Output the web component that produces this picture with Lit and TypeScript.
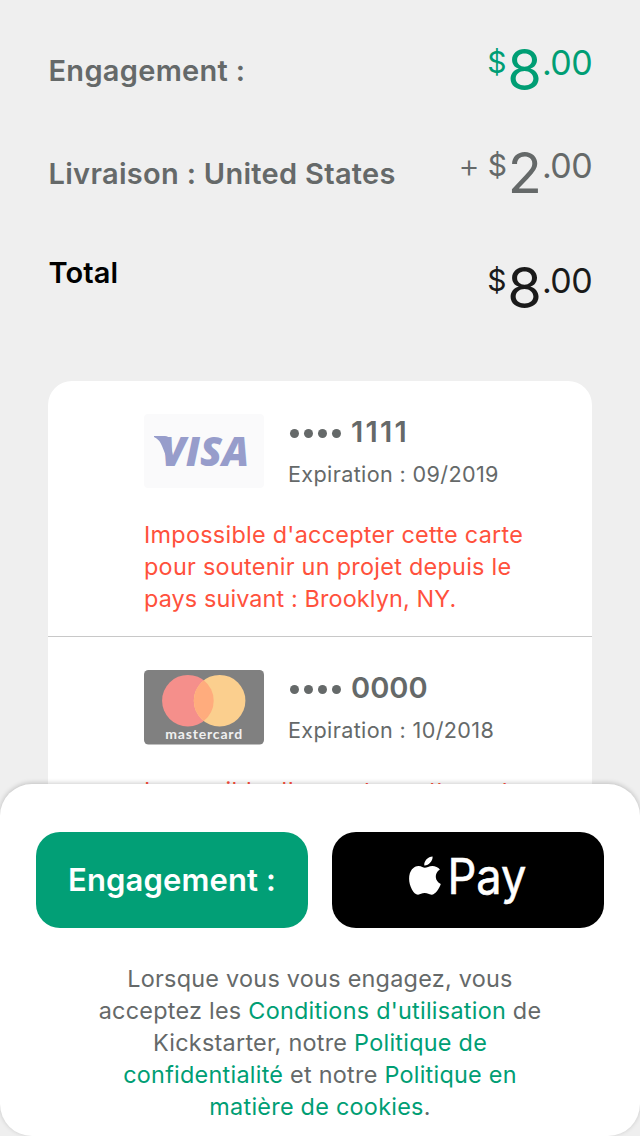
import { LitElement, html, css, svg } from "lit";
import { customElement, property } from "lit/decorators.js";

@customElement("price-tag")
class PriceTag extends LitElement {
  @property() amount = "0";
  @property() prefix = "";
  static styles = css`
    :host { display: flex; align-items: flex-start; font-weight: 400; }
    .plus { font-size: 33px; line-height: 36px; margin-right: 8px; font-weight: 300; }
    .plus, .sym, .main, .cents { display: block; white-space: pre; }
    .sym { font-size: 30px; line-height: 37px; width: 20px; }
    .main { font-size: 56px; line-height: 52px; }
    .cents { font-size: 34px; line-height: 37px; letter-spacing: -0.6px; }
  `;
  render() {
    return html`${this.prefix ? html`<span class="plus">${this.prefix}</span>` : ""}<span class="sym">$</span><span class="main">${this.amount}</span><span class="cents">.00</span>`;
  }
}

const visa = svg`<svg viewBox="0 0 120 74" width="120" height="74">
  <rect width="120" height="74" rx="4" fill="#fafafb"/>
  <path d="M10 22H21Q24.500 22 25.300 25L30 46L25 51Q22 41 18 32Q15.500 25.500 10 23Z" fill="#979dcb"/>
  <text x="17" y="51.500" font-family="Open Sans" font-weight="800" font-style="italic" font-size="41.500" textLength="88" lengthAdjust="spacingAndGlyphs" fill="#979dcb">VISA</text>
</svg>`;

const mastercard = svg`<svg viewBox="0 0 120 74.500" width="120" height="74.500">
  <rect width="120" height="74.500" rx="4.500" fill="#808080"/>
  <circle cx="43.900" cy="30.700" r="25.800" fill="#f58f8b"/>
  <circle cx="75.600" cy="30.700" r="25.800" fill="#fbcf8e"/>
  <path d="M59.750 10.340a25.800 25.800 0 0 1 0 40.720a25.800 25.800 0 0 1 0-40.720Z" fill="#ffac7d"/>
  <text x="21.200" y="69.300" font-family="Lato" font-weight="700" font-size="14" textLength="77" fill="#f0f0f0">mastercard</text>
</svg>`;

@customElement("app-root")
class AppRoot extends LitElement {
  static styles = css`
    :host { display: flex; flex-direction: column; height: 1136px; overflow: hidden; background: #efefef; font-family: Inter, "Liberation Sans", sans-serif; color: #656969; }
    .summary { display: flex; flex-direction: column; height: 381px; box-sizing: border-box; padding: 44px 48px 0; }
    .row { display: flex; justify-content: space-between; height: 103px; }
    .row.last { padding-top: 12px; color: #1a1a1a; }
    .label { font-size: 29px; font-weight: 580; line-height: 36px; margin: 9px 0 0 0.5px; white-space: pre; letter-spacing: 0.3px; }
    .last .label { margin-top: -7px; color: #000; letter-spacing: 0.1px; }
    .green { color: #009e74; }
    .cards { height: 403px; flex: none; overflow: hidden; margin: 0 48px; background: #fff; border-radius: 24px 24px 0 0; }
    .card { height: 255px; box-sizing: content-box; border-bottom: 1px solid #c8c8c8; }
    .top { display: flex; gap: 24px; padding: 33px 0 0 96px; height: 105px; }
    .top svg { display: block; flex: none; }
    .num { display: flex; align-items: center; font-size: 29px; font-weight: 600; line-height: 36px; }
    .dots { display: flex; gap: 5px; margin: 3px 10px 0 2px; }
    .dot { width: 9px; height: 9px; border-radius: 50%; background: #656969; }
    .digits.ones { letter-spacing: 2.2px; }
    .exp { font-size: 21.6px; line-height: 28px; margin-top: 10px; letter-spacing: 0.36px; white-space: pre; }
    .error { margin-left: 96px; font-size: 23.4px; line-height: 32px; color: #ff513c; white-space: nowrap; letter-spacing: 0.28px; }
    .place { letter-spacing: 0.12px; }
    .sheet { position: relative; height: 352px; flex: none; box-sizing: border-box; padding: 48px 36px 0; background: #fff; border-radius: 32px; box-shadow: 0 -1px 5px rgba(0,0,0,.2); }
    .buttons { display: flex; gap: 24px; }
    .btn { flex: 1; height: 96px; box-sizing: border-box; border-radius: 24px; display: flex; align-items: center; justify-content: center; background: #029f76; color: #fff; font-size: 31px; font-weight: 580; white-space: pre; letter-spacing: 0.12px; padding-bottom: 1px; }
    .pay { background: #000; padding: 0; font-weight: 400; letter-spacing: 0; }
    .pay svg { display: block; }
    .legal { margin-top: 35px; text-align: center; font-size: 23.4px; line-height: 32px; letter-spacing: 0.26px; white-space: nowrap; }
  `;
  card(logo: unknown, num: string, exp: string) {
    return html`<div class="card">
      <div class="top">${logo}<div>
        <div class="num"><span class="dots">${[0, 1, 2, 3].map(() => html`<i class="dot"></i>`)}</span><span class="digits ${num === "1111" ? "ones" : ""}">${num}</span></div>
        <div class="exp">Expiration : ${exp}</div></div></div>
      <div class="error">
        <div>Impossible d'accepter cette carte</div>
        <div>pour soutenir un projet depuis le</div>
        <div class="place">pays suivant : Brooklyn, NY.</div>
      </div>
    </div>`;
  }
  render() {
    return html`
      <div class="summary">
        <div class="row"><span class="label">Engagement :</span><price-tag class="green" amount="8"></price-tag></div>
        <div class="row"><span class="label">Livraison : United States</span><price-tag prefix="+" amount="2"></price-tag></div>
        <div class="row last"><span class="label">Total</span><price-tag amount="8"></price-tag></div>
      </div>
      <div class="cards">
        ${this.card(visa, "1111", "09/2019")}
        ${this.card(mastercard, "0000", "10/2018")}
      </div>
      <div class="sheet">
        <div class="buttons">
          <div class="btn">Engagement :</div>
          <div class="btn pay"><svg width="120" height="76" viewBox="0 -10 120 76">
            <path transform="translate(-1.900 .5)" fill="#fff" d="M26.500 4C26.800 8.500 22.500 13.200 18.200 12.900C17.600 8.500 22 4.200 26.500 4ZM18.700 15.300C20.500 15.300 23 13.400 26.300 13.400C29 13.400 32.200 14.700 33.800 17.100C27.800 20.700 28.600 29 34.700 31.500C33.200 35.700 29.400 42.200 25.500 42.200C22.700 42.200 21.700 40.600 18.600 40.600C15.500 40.600 14.300 42.200 11.900 42.200C7.300 42.200 3 33.100 3 26.200C3 18 7.600 13.400 12.500 13.400C15.400 13.400 17.300 15.300 18.700 15.300Z"/>
            <text x="39.500" y="42.200" font-family="Inter" font-size="49.500" textLength="79" lengthAdjust="spacingAndGlyphs" fill="#fff" stroke="#fff" stroke-width=".6">Pay</text>
          </svg></div>
        </div>
        <div class="legal">
          <div>Lorsque vous vous engagez, vous</div>
          <div>acceptez les <span class="green">Conditions d'utilisation</span> de</div>
          <div>Kickstarter, notre <span class="green">Politique de</span></div>
          <div><span class="green">confidentialité</span> et notre <span class="green">Politique en</span></div>
          <div><span class="green">matière de cookies</span>.</div>
        </div>
      </div>`;
  }
}
